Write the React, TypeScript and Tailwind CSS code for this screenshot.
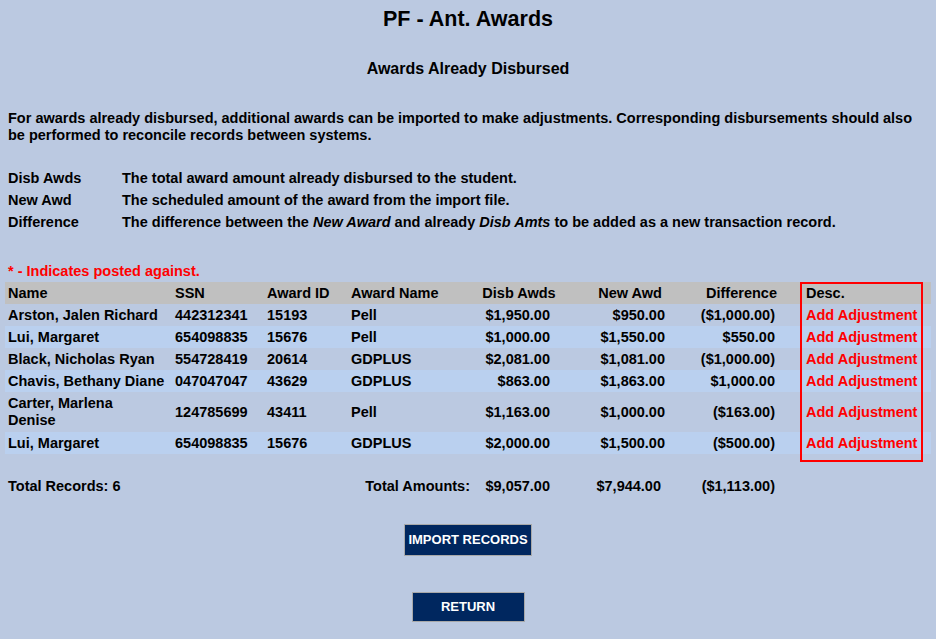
const rows = [
  { name: ['Arston, Jalen Richard'], ssn: '442312341', id: '15193', award: 'Pell', disb: '$1,950.00', next: '$950.00', diff: '($1,000.00)' },
  { name: ['Lui, Margaret'], ssn: '654098835', id: '15676', award: 'Pell', disb: '$1,000.00', next: '$1,550.00', diff: '$550.00' },
  { name: ['Black, Nicholas Ryan'], ssn: '554728419', id: '20614', award: 'GDPLUS', disb: '$2,081.00', next: '$1,081.00', diff: '($1,000.00)' },
  { name: ['Chavis, Bethany Diane'], ssn: '047047047', id: '43629', award: 'GDPLUS', disb: '$863.00', next: '$1,863.00', diff: '$1,000.00' },
  { name: ['Carter, Marlena', 'Denise'], ssn: '124785699', id: '43411', award: 'Pell', disb: '$1,163.00', next: '$1,000.00', diff: '($163.00)' },
  { name: ['Lui, Margaret'], ssn: '654098835', id: '15676', award: 'GDPLUS', disb: '$2,000.00', next: '$1,500.00', diff: '($500.00)' },
]

const cols = 'grid grid-cols-[165px_92px_84px_124px_98px_124px_99px_1fr]'

function App() {
  return (
    <div className="min-h-[639px] bg-[#bbc9e1] px-[5px] pt-[7px] text-[14.5px] font-bold text-black [font-family:'Liberation_Sans',Arial,sans-serif]">
      {/* Header */}
      <h1 className="text-center text-[21.5px] leading-[24px]">PF - Ant. Awards</h1>
      <h2 className="mt-[28px] text-center text-[16px] leading-[20px]">Awards Already Disbursed</h2>

      <p className="mt-[31px] pl-[3px] pr-[10px] leading-[17px]">
        For awards already disbursed, additional awards can be imported to make adjustments. Corresponding disbursements should also be performed to reconcile records between systems.
      </p>

      {/* Definitions */}
      <div className="mt-[23px] pl-[3px]">
        <div className="flex leading-[22px]">
          <span className="w-[114px]">Disb Awds</span>
          <span>The total award amount already disbursed to the student.</span>
        </div>
        <div className="flex leading-[22px]">
          <span className="w-[114px]">New Awd</span>
          <span>The scheduled amount of the award from the import file.</span>
        </div>
        <div className="flex leading-[22px]">
          <span className="w-[114px]">Difference</span>
          <span>
            The difference between the <i>New Award</i> and already <i>Disb Amts</i> to be added as a new transaction record.
          </span>
        </div>
      </div>

      <div className="mt-[29px] pl-[3px] leading-[18px] text-[#ff0000]">* - Indicates posted against.</div>

      {/* Table */}
      <div className="relative mt-[2px]">
        <div className={`${cols} bg-[#c0c0c0] leading-[16px]`}>
          <div className="py-[3px] pl-[3px]">Name</div>
          <div className="py-[3px] pl-[5px]">SSN</div>
          <div className="py-[3px] pl-[5px]">Award ID</div>
          <div className="py-[3px] pl-[5px]">Award Name</div>
          <div className="py-[3px] text-center">Disb Awds</div>
          <div className="py-[3px] text-center">New Awd</div>
          <div className="py-[3px] text-center">Difference</div>
          <div className="py-[3px] pl-[15px]">Desc.</div>
        </div>
        {rows.map((r, i) => (
          <div key={i} className={`${cols} items-center leading-[16px] ${i % 2 === 1 ? 'bg-[#bad0ef]' : 'bg-[#bbc9e1]'}`}>
            <div className="py-[3px] pl-[3px]">
              {r.name.map((n) => (
                <div key={n} className={r.name.length > 1 ? 'leading-[17px]' : ''}>{n}</div>
              ))}
            </div>
            <div className="py-[3px] pl-[5px]">{r.ssn}</div>
            <div className="py-[3px] pl-[5px]">{r.id}</div>
            <div className="py-[3px] pl-[5px]">{r.award}</div>
            <div className="py-[3px] pr-[18px] text-right">{r.disb}</div>
            <div className="py-[3px] pr-[27px] text-right">{r.next}</div>
            <div className="py-[3px] pr-[16px] text-right">{r.diff}</div>
            <div className="py-[3px] pl-[15px] text-[#ff0000]">Add Adjustment</div>
          </div>
        ))}
        {/* highlight box */}
        <div className="pointer-events-none absolute left-[795px] top-0 h-[180px] w-[123px] border-2 border-[#ff0000]" />

        {/* Totals */}
        <div className={`${cols} mt-[21px] leading-[22px]`}>
          <div className="pl-[3px]">Total Records: 6</div>
          <div />
          <div />
          <div className="text-right">Total Amounts:</div>
          <div className="pr-[18px] text-right">$9,057.00</div>
          <div className="pr-[31px] text-right">$7,944.00</div>
          <div className="pr-[16px] text-right">($1,113.00)</div>
          <div />
        </div>
      </div>

      {/* Buttons */}
      <div className="mt-[27px] flex flex-col items-center">
        <button className="h-[32px] w-[128px] whitespace-nowrap border border-[#a8a8a8] bg-[#00275f] text-[13px] font-bold text-white">
          IMPORT RECORDS
        </button>
        <button className="mt-[36px] h-[30px] w-[113px] border border-[#a8a8a8] bg-[#00275f] text-[13px] font-bold text-white">
          RETURN
        </button>
      </div>
    </div>
  )
}

export default App
